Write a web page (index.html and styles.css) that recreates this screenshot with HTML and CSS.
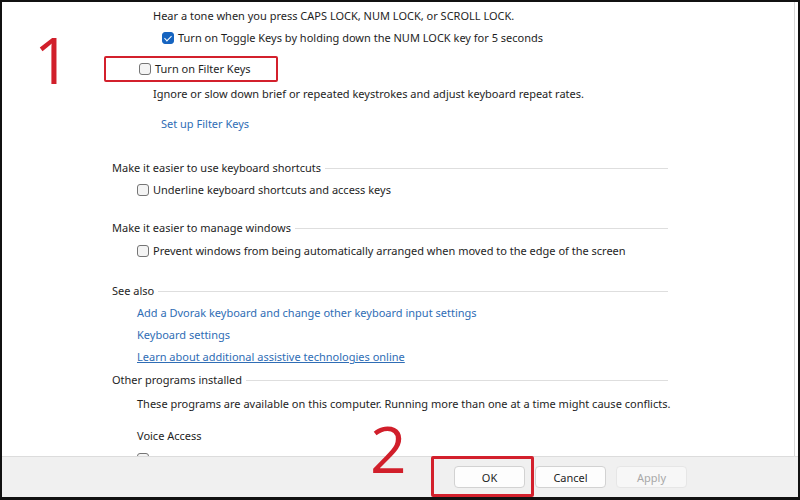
FILE: index.html
```html
<!DOCTYPE html>
<html lang="en">
  <head>
    <meta charset="UTF-8" />
    <title>Keyboard settings</title>
    <link rel="stylesheet" href="styles.css">
  </head>
  <body>
    <div class="frame">
      <div class="content">
        <p class="row deep">Hear a tone when you press CAPS LOCK, NUM LOCK, or SCROLL LOCK.</p>
        <label class="row check toggle"><span class="box checked"></span>Turn on Toggle Keys by holding down the NUM LOCK key for 5 seconds</label>
        <div class="mark-box">
          <label class="row check"><span class="box"></span>Turn on Filter Keys</label>
        </div>
        <p class="row deep ignore">Ignore or slow down brief or repeated keystrokes and adjust keyboard repeat rates.</p>
        <a class="row link setup">Set up Filter Keys</a>

        <h3 class="row heading shortcuts">Make it easier to use keyboard shortcuts</h3>
        <label class="row check"><span class="box"></span>Underline keyboard shortcuts and access keys</label>

        <h3 class="row heading windows">Make it easier to manage windows</h3>
        <label class="row check gap1"><span class="box"></span>Prevent windows from being automatically arranged when moved to the edge of the screen</label>

        <h3 class="row heading see">See also</h3>
        <a class="row link indent">Add a Dvorak keyboard and change other keyboard input settings</a>
        <a class="row link indent">Keyboard settings</a>
        <a class="row link indent underline">Learn about additional assistive technologies online</a>

        <h3 class="row heading other">Other programs installed</h3>
        <p class="row indent programs">These programs are available on this computer. Running more than one at a time might cause conflicts.</p>
        <p class="row indent voice">Voice Access</p>
        <label class="row check"><span class="box"></span></label>

        <span class="num one">1</span>
      </div>
      <div class="footer">
        <button type="button" class="btn">OK</button>
        <button type="button" class="btn">Cancel</button>
        <button type="button" class="btn" disabled>Apply</button>
        <span class="num two">2</span>
        <span class="ok-mark"></span>
      </div>
    </div>
  </body>
</html>
```

FILE: styles.css
```css
* {
  box-sizing: border-box;
}

body {
  margin: 0;
  font-family: "Noto Sans", "Open Sans", sans-serif;
  font-size: 11px;
  color: #1e1e1e;
  background: #fff;
}

.frame {
  width: 800px;
  height: 500px;
  border: 2px solid #111;
  border-bottom-width: 3px;
  display: flex;
  flex-direction: column;
  position: relative;
  overflow: hidden;
}

.content {
  height: 454px;
  padding-top: 3px;
  border-right: 1px solid #d8d8d8;
  margin-right: 3px;
  overflow: hidden;
  display: flex;
  flex-direction: column;
  align-items: flex-start;
}

.row {
  margin: 0;
  height: 22px;
  line-height: 22px;
  white-space: nowrap;
}

.deep {
  margin-left: 151px;
}

.indent {
  margin-left: 135px;
}

/* checkboxes */
.check {
  display: flex;
  align-items: center;
  margin-left: 135px;
}
.check.toggle {
  margin-left: 160px;
}
.box {
  width: 12px;
  height: 12px;
  margin-right: 4px;
  border: 1px solid #757575;
  border-radius: 3px;
  background: #f4f4f4;
  position: relative;
}
.box.checked {
  background: #1664c0;
  border-color: #1664c0;
}
.box.checked::after {
  content: "";
  position: absolute;
  left: 3px;
  top: 1px;
  width: 3px;
  height: 6px;
  border: solid #fff;
  border-width: 0 1.5px 1.5px 0;
  transform: rotate(45deg);
}

.mark-box {
  margin: 7px 0 0 102px;
  height: 28px;
  width: 174px;
  border: 2px solid #d3202c;
  border-radius: 2px;
  display: flex;
  align-items: center;
}
.mark-box .check {
  margin-left: 33px;
}

.ignore {
  margin-top: 1px;
}

.link {
  color: #2f6db5;
  text-decoration: none;
}
.link.underline {
  text-decoration: underline;
}
.setup {
  margin: 8px 0 0 159px;
}

/* section headings with rule */
.heading {
  display: flex;
  align-items: center;
  width: 556px;
  margin-left: 110px;
  font-size: 11px;
  font-weight: normal;
}
.heading::after {
  content: "";
  flex: 1;
  margin-left: 4px;
  border-top: 1px solid #dedede;
}
.shortcuts {
  margin-top: 22px;
}
.windows {
  margin-top: 16px;
}
.gap1 {
  margin-top: 1px;
}
.see {
  margin-top: 18px;
}
.other {
  margin-top: 1px;
}
.programs {
  margin-top: 2px;
}
.voice {
  margin-top: 10px;
}
.voice + .check {
  margin-top: 6px;
}

/* dialog buttons */
.footer {
  flex: 1;
  background: #f0f0f0;
  border-top: 1px solid #dcdcdc;
  display: flex;
  align-items: center;
  gap: 10px;
  padding-left: 452px;
  position: relative;
}
.btn {
  width: 71px;
  height: 22px;
  font-family: inherit;
  font-size: 11px;
  color: #1e1e1e;
  background: #fdfdfd;
  border: 1px solid #d2d2d2;
  border-radius: 4px;
}
.btn:disabled {
  color: #a8a8a8;
  background: #f7f7f7;
  border-color: #e6e6e6;
}

/* red annotations */
.num {
  position: absolute;
  font-family: "Open Sans", sans-serif;
  font-size: 64px;
  line-height: 1;
  color: #d11f2b;
}
.one {
  left: 32px;
  top: 26px;
}
.two {
  left: 368px;
  top: -40px;
}
.ok-mark {
  position: absolute;
  left: 429px;
  top: -1px;
  width: 103px;
  height: 41px;
  border: 3px solid #d3202c;
  border-radius: 2px;
}
```
